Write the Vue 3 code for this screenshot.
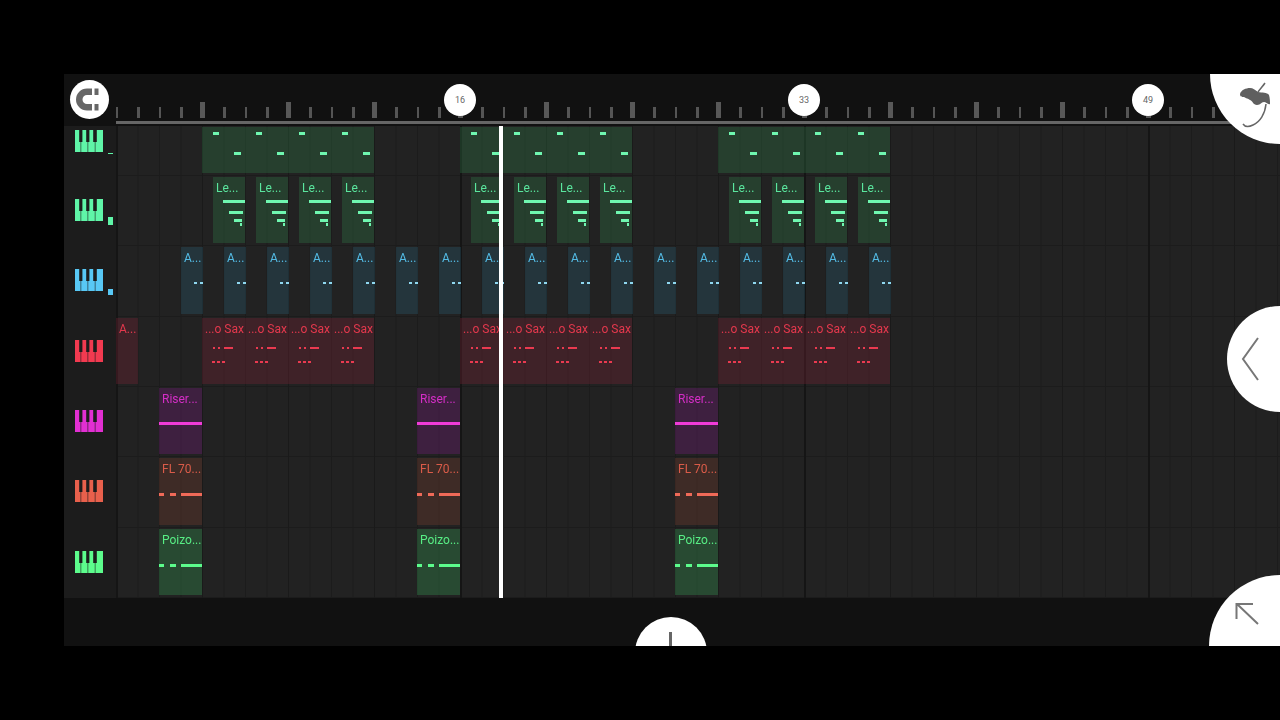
<template>
  <div class="screen">
    <div class="topbar">
      <div class="ruler">
        <div v-for="n in 52" :key="n" class="tick-cell">
          <span class="tick" :class="{ major: (n - 1) % 4 === 0 && n > 1 }"></span>
        </div>
      </div>
      <div class="ruler-line"></div>
    </div>

    <div class="tracks">
      <div v-for="track in tracks" :key="track.name" class="track" :class="track.name">
        <div class="track-head">
          <svg class="keys" viewBox="0 0 28 22" :style="{ color: track.color }">
            <rect x="0" y="0" width="28" height="22" fill="currentColor" />
            <rect x="5.6" y="12" width="0.6" height="10" fill="#1c1c1c" />
            <rect x="12.6" y="12" width="0.6" height="10" fill="#1c1c1c" />
            <rect x="19.8" y="12" width="0.6" height="10" fill="#1c1c1c" />
            <rect x="4.2" y="0" width="3.2" height="12" fill="#1c1c1c" />
            <rect x="11.2" y="0" width="3.2" height="12" fill="#1c1c1c" />
            <rect x="18.2" y="0" width="3.6" height="12" fill="#1c1c1c" />
          </svg>
          <span v-if="track.meter" class="meter" :class="track.meter" :style="{ background: track.color }"></span>
        </div>
        <div class="lane">
          <div
            v-for="clip in track.clips"
            :key="clip.x"
            class="clip"
            :style="{ left: clip.x + 'px', width: clip.w + 'px', background: track.clipBg }"
          >
            <span v-if="clip.label" class="clip-label" :style="{ color: track.color }">{{ clip.label }}</span>
            <i
              v-for="(note, i) in clip.notes"
              :key="i"
              class="note"
              :style="{
                left: note[0] + 'px',
                top: note[1] + 'px',
                width: note[2] + 'px',
                height: note[3] + 'px',
                background: track.noteColor
              }"
            ></i>
          </div>
        </div>
      </div>
      <div class="playhead"></div>
    </div>

    <div class="bottombar"></div>

    <!-- floating buttons -->
    <button class="bubble magnet">
      <svg viewBox="0 0 39 39" width="39" height="39">
        <path d="M22 8.5h-5a11 11 0 0 0 0 22h5v-6.5h-5a4.5 4.5 0 0 1 0-9h5z" fill="#666" />
        <rect x="24.5" y="8.5" width="4" height="6.5" fill="#666" />
        <rect x="24.5" y="24" width="4" height="6.5" fill="#666" />
      </svg>
    </button>
    <span class="bubble marker m16">16</span>
    <span class="bubble marker m33">33</span>
    <span class="bubble marker m49">49</span>

    <button class="bubble corner-logo">
      <svg class="fruit" viewBox="0 0 40 50" width="40" height="50">
        <path d="M3 12C4 8 9 6 13 6c3 0 5 2 8 4 4 1 9 0 11 3 1 3 1 7 1 9-2 1-4-2-6-2-3 0-3 3-7 3-4 0-4-4-7-5-3-2-5-2-6-3-2 0-4 0-4-3z" fill="#5f5f5f" />
        <path d="M28 1c-2 3-5 6-7 9M29 22c-1 10-6 18-13 21-4 2-8 2-10-1" fill="none" stroke="#666" stroke-width="1.5" />
      </svg>
    </button>
    <button class="bubble side-arrow">
      <svg viewBox="0 0 20 46" width="20" height="46">
        <path d="M17 2 2 23l15 21" fill="none" stroke="#777" stroke-width="2" />
      </svg>
    </button>
    <button class="bubble corner-arrow">
      <svg viewBox="0 0 26 26" width="26" height="26">
        <path d="M2.5 18V3H19M3 3 24 23" fill="none" stroke="#777" stroke-width="2" />
      </svg>
    </button>
    <button class="bubble bottom-plus"><span class="plus-stem"></span></button>
  </div>
</template>

<script setup>
const SEG = 43
const BEAT = 21.5

// clips repeat in three groups on the timeline
const groupStarts = [202, 460, 718]

const segments = (offset, w, label, notes) => {
  const out = []
  groupStarts.forEach((start) => {
    for (let i = 0; i < 4; i++) {
      out.push({ x: start + i * SEG + offset - 116, w, label, notes })
    }
  })
  return out
}

const arpClips = () => {
  const out = []
  for (let i = 0; i < 17; i++) {
    const x = 181 + i * SEG
    out.push({ x: x - 116, w: BEAT, label: 'A...', notes: [[13, 35, 3, 2], [19, 35, 2.5, 2]] })
  }
  return out
}

const risers = (label, notes) => [159, 417, 675].map((x) => ({ x: x - 116, w: SEG, label, notes }))

const tracks = [
  {
    name: 'lead-top',
    color: '#5ff5a8',
    noteColor: '#6ff7b0',
    clipBg: 'rgba(45, 117, 68, 0.35)',
    meter: 'dash',
    clips: segments(0, SEG, '', [[11, 4.5, 6, 3], [32, 24.5, 7, 3]])
  },
  {
    name: 'lead',
    color: '#5ff5a8',
    noteColor: '#6ff7b0',
    clipBg: 'rgba(45, 117, 68, 0.35)',
    meter: 'square',
    clips: segments(11, 32, 'Le...', [[10, 22.5, 22, 3], [16, 33.5, 14, 3], [21, 42, 8, 3], [27, 46, 2, 3]])
  },
  {
    name: 'arp',
    color: '#58c8f5',
    noteColor: '#8fd8f0',
    clipBg: 'rgba(40, 88, 108, 0.35)',
    meter: 'small',
    clips: arpClips()
  },
  {
    name: 'sax',
    color: '#f23a50',
    noteColor: '#ea3a50',
    clipBg: 'rgba(117, 34, 51, 0.35)',
    clips: [
      { x: 0, w: BEAT, label: 'A...', notes: [] },
      ...segments(0, SEG, '...o Sax', [
        [11, 29, 2, 2], [16, 29, 2, 2], [22, 29, 9, 2],
        [10, 43, 3, 2], [15, 43, 3, 2], [20, 43, 3, 2]
      ])
    ]
  },
  {
    name: 'riser',
    color: '#e22fd2',
    noteColor: '#f03bd8',
    clipBg: 'rgba(114, 28, 120, 0.35)',
    clips: risers('Riser...', [[0, 34.5, SEG, 3]])
  },
  {
    name: 'fl',
    color: '#e8604c',
    noteColor: '#f06a58',
    clipBg: 'rgba(114, 60, 46, 0.35)',
    clips: risers('FL 70...', [[0, 35, 5, 2.5], [11, 35, 6, 2.5], [22, 35, 21, 2.5]])
  },
  {
    name: 'poizone',
    color: '#5cfc8c',
    noteColor: '#5cfc8c',
    clipBg: 'rgba(51, 148, 80, 0.35)',
    clips: risers('Poizo...', [[0, 35.5, 5, 2.5], [11, 35.5, 6, 2.5], [22, 35.5, 21, 2.5]])
  }
]
</script>

<style>
html,
body {
  margin: 0;
  background: #000;
}
</style>

<style scoped>
.screen {
  position: relative;
  width: 1216px;
  height: 572px;
  margin: 74px 0 0 64px;
  background: #111;
  overflow: hidden;
  font-family: Roboto, "Liberation Sans", sans-serif;
}

.topbar {
  height: 52px;
  box-sizing: border-box;
  padding-top: 29px;
  background: #111;
}

.ruler {
  display: flex;
  height: 18px;
  padding-left: 42px;
  align-items: flex-end;
}

.tick-cell {
  flex: 0 0 21.5px;
  display: flex;
  justify-content: center;
  align-items: flex-end;
  padding-bottom: 3px;
}

.tick {
  width: 2.5px;
  height: 11px;
  background: #555;
}

.tick.major {
  width: 5px;
  height: 16px;
  background: #585858;
}

.ruler-line {
  height: 3px;
  margin-left: 52px;
  background: #666;
}

.tracks {
  position: relative;
  filter: blur(0.35px);
}

.track {
  display: flex;
  height: 70.33px;
}

.track.lead-top {
  height: 50px;
}

.track-head {
  position: relative;
  flex: 0 0 52px;
  display: flex;
  align-items: center;
  background: #1c1c1c;
  box-sizing: border-box;
}

.lead-top .track-head {
  align-items: flex-start;
}

.keys {
  width: 28px;
  height: 22px;
  margin: 0 0 2px 11px;
}

.lead-top .keys {
  margin-top: 4px;
}

.meter {
  position: absolute;
  left: 44px;
}

.meter.dash {
  top: 27px;
  width: 5px;
  height: 1px;
}

.meter.square {
  top: 41px;
  width: 5px;
  height: 8px;
}

.meter.small {
  top: 43px;
  width: 5px;
  height: 6px;
}

.lane {
  position: relative;
  flex: 1;
  background-color: #222;
  background-image:
    linear-gradient(to right, #151515 2px, transparent 2px),
    linear-gradient(to right, #1a1a1a 1.5px, transparent 1.5px),
    linear-gradient(to right, #1c1c1c 1px, transparent 1px),
    linear-gradient(to top, #1c1c1c 1px, transparent 1px);
  background-size: 344px 100%, 86px 100%, 21.5px 100%, 100% 100%;
}

.clip {
  position: absolute;
  top: 1px;
  bottom: 3px;
  overflow: hidden;
}

.clip-label {
  position: absolute;
  top: 3px;
  left: 3px;
  font-size: 12px;
  line-height: 16px;
  white-space: nowrap;
  opacity: 0.92;
}

.note {
  position: absolute;
}

.playhead {
  position: absolute;
  top: 0;
  left: 435px;
  width: 4px;
  height: 472px;
  background: #fff;
}

.bottombar {
  height: 48px;
  background: #111;
}

.bubble {
  position: absolute;
  display: flex;
  align-items: center;
  justify-content: center;
  padding: 0;
  border: 0;
  border-radius: 50%;
  background: #fff;
  box-sizing: border-box;
}

.magnet {
  left: 6px;
  top: 6px;
  width: 39px;
  height: 39px;
}

.marker {
  top: 10px;
  width: 32px;
  height: 32px;
  color: #666;
  font-size: 9px;
}

.m16 {
  left: 380px;
}

.m33 {
  left: 724px;
}

.m49 {
  left: 1068px;
}

.corner-logo {
  left: 1146px;
  top: -70px;
  width: 140px;
  height: 140px;
}

.fruit {
  position: absolute;
  left: 27px;
  top: 78px;
}

.side-arrow {
  left: 1163px;
  top: 232px;
  width: 106px;
  height: 106px;
  justify-content: flex-start;
  padding-left: 14px;
}

.corner-arrow {
  left: 1145px;
  top: 501px;
  width: 142px;
  height: 142px;
}

.corner-arrow svg {
  position: absolute;
  left: 25px;
  top: 26px;
}

.bottom-plus {
  left: 571px;
  top: 543px;
  width: 72px;
  height: 72px;
}

.plus-stem {
  position: absolute;
  left: 34px;
  top: 15px;
  width: 3px;
  height: 16px;
  background: #666;
}
</style>
